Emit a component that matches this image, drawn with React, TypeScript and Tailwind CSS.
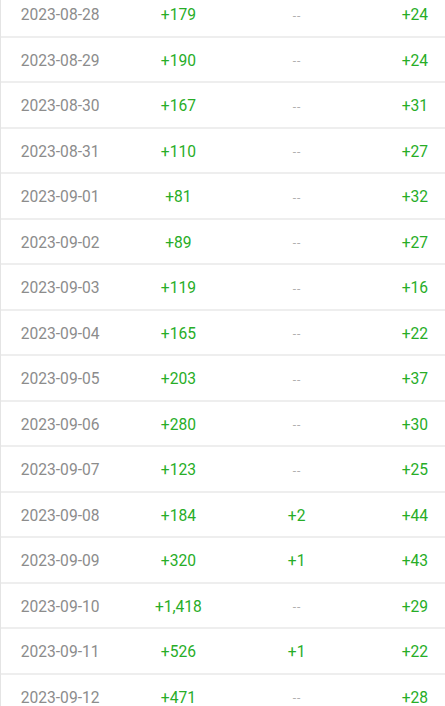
import React from "react";

const rows: [string, string, string, string][] = [
  ["2023-08-28", "+179", "--", "+24"],
  ["2023-08-29", "+190", "--", "+24"],
  ["2023-08-30", "+167", "--", "+31"],
  ["2023-08-31", "+110", "--", "+27"],
  ["2023-09-01", "+81", "--", "+32"],
  ["2023-09-02", "+89", "--", "+27"],
  ["2023-09-03", "+119", "--", "+16"],
  ["2023-09-04", "+165", "--", "+22"],
  ["2023-09-05", "+203", "--", "+37"],
  ["2023-09-06", "+280", "--", "+30"],
  ["2023-09-07", "+123", "--", "+25"],
  ["2023-09-08", "+184", "+2", "+44"],
  ["2023-09-09", "+320", "+1", "+43"],
  ["2023-09-10", "+1,418", "--", "+29"],
  ["2023-09-11", "+526", "+1", "+22"],
  ["2023-09-12", "+471", "--", "+28"],
];

function Cell({ v, date }: { v: string; date?: boolean }) {
  const dash = v === "--";
  return (
    <div
      className={
        "flex items-center justify-center pt-[4px] " +
        (date ? "text-[#8c8c8c]" : dash ? "text-[#b0b0b0] text-[12px] tracking-[1px] pl-[1px]" : "text-[#27ad27]")
      }
    >
      {v}
    </div>
  );
}

export default function App() {
  return (
    <div className="w-[445px] h-[706px] overflow-hidden bg-white" style={{ fontFamily: "Roboto, 'Noto Sans', sans-serif" }}>
      <div className="mt-[-8px] w-[474px] border-l border-[#e4e4e4] text-[15.6px]">
        {rows.map((r, i) => (
          <div
            key={i}
            className="grid grid-cols-4 h-[45.5px] box-border border-b-2 border-[#eeeeee]"
          >
            <Cell v={r[0]} date />
            <Cell v={r[1]} />
            <Cell v={r[2]} />
            <Cell v={r[3]} />
          </div>
        ))}
      </div>
    </div>
  );
}
